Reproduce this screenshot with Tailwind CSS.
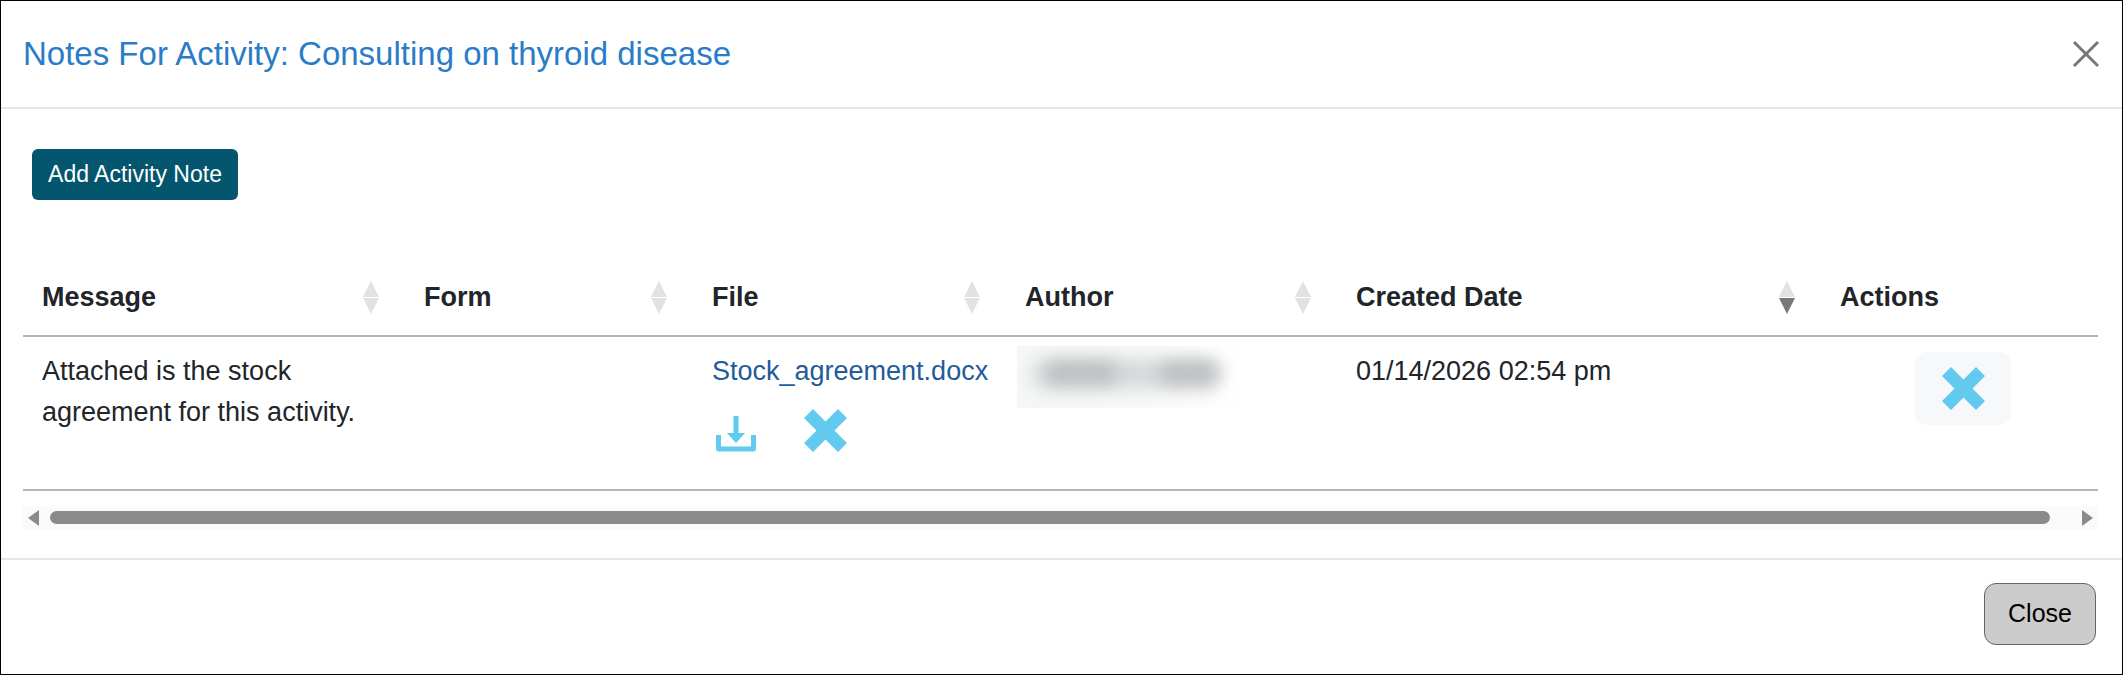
<!DOCTYPE html>
<html lang="en">
<head>
  <meta charset="UTF-8" />
  <title>Notes For Activity</title>
  <script src="https://cdn.jsdelivr.net/npm/@tailwindcss/browser@4"></script>
</head>
<body class="bg-white font-['Liberation_Sans',Arial,sans-serif] text-[#212529]">

  <div class="w-[2123px] h-[675px] border border-black flex flex-col overflow-hidden">

    <!-- header -->
    <div class="h-[108px] shrink-0 border-b-2 border-[#e5e7e9] flex items-center justify-between pl-[22px] pr-[22px]">
      <h4 class="text-[33px] leading-[40px] text-[#2a7cc7]">Notes For Activity: Consulting on thyroid disease</h4>
      <button aria-label="Close">
        <svg class="w-[28px] h-[28px]" viewBox="0 0 28 28" fill="none" stroke="#777" stroke-width="3"><path d="M2 2 L26 26 M26 2 L2 26" /></svg>
      </button>
    </div>

    <!-- body -->
    <div class="flex-1 pl-[22px] pr-[24px]">
      <button class="mt-[40px] ml-[9px] w-[206px] h-[51px] rounded-[6px] bg-[#04566e] text-white text-[23px]">Add Activity Note</button>

      <table class="w-[2075px] mt-[53px] table-fixed border-collapse text-[27px] leading-[41px]">
        <colgroup>
          <col class="w-[382px]" /><col class="w-[288px]" /><col class="w-[313px]" /><col class="w-[331px]" /><col class="w-[484px]" /><col />
        </colgroup>
        <thead>
          <tr class="h-[83px] border-b-2 border-[#b5b5b5] font-bold">
            <th class="text-left pl-[19px] pt-[7px] relative">Message<span class="absolute right-[26px] top-[28px] flex flex-col gap-[1px]"><span class="w-0 h-0 border-x-[8px] border-x-transparent border-b-[16px] border-b-[#e1e3e3]"></span><span class="w-0 h-0 border-x-[8px] border-x-transparent border-t-[16px] border-t-[#e1e3e3]"></span></span></th>
            <th class="text-left pl-[19px] pt-[7px] relative">Form<span class="absolute right-[26px] top-[28px] flex flex-col gap-[1px]"><span class="w-0 h-0 border-x-[8px] border-x-transparent border-b-[16px] border-b-[#e1e3e3]"></span><span class="w-0 h-0 border-x-[8px] border-x-transparent border-t-[16px] border-t-[#e1e3e3]"></span></span></th>
            <th class="text-left pl-[19px] pt-[7px] relative">File<span class="absolute right-[26px] top-[28px] flex flex-col gap-[1px]"><span class="w-0 h-0 border-x-[8px] border-x-transparent border-b-[16px] border-b-[#e1e3e3]"></span><span class="w-0 h-0 border-x-[8px] border-x-transparent border-t-[16px] border-t-[#e1e3e3]"></span></span></th>
            <th class="text-left pl-[19px] pt-[7px] relative">Author<span class="absolute right-[26px] top-[28px] flex flex-col gap-[1px]"><span class="w-0 h-0 border-x-[8px] border-x-transparent border-b-[16px] border-b-[#e1e3e3]"></span><span class="w-0 h-0 border-x-[8px] border-x-transparent border-t-[16px] border-t-[#e1e3e3]"></span></span></th>
            <th class="text-left pl-[19px] pt-[7px] relative">Created Date<span class="absolute right-[26px] top-[28px] flex flex-col gap-[1px]"><span class="w-0 h-0 border-x-[8px] border-x-transparent border-b-[16px] border-b-[#e1e3e3]"></span><span class="w-0 h-0 border-x-[8px] border-x-transparent border-t-[16px] border-t-[#77787b]"></span></span></th>
            <th class="text-left pl-[19px] pt-[7px]">Actions</th>
          </tr>
        </thead>
        <tbody>
          <tr class="h-[154px] border-b-2 border-[#b5b5b5] align-top">
            <td class="pl-[19px] pt-[14px] pr-[40px]">Attached is the stock agreement for this activity.</td>
            <td></td>
            <td class="pl-[19px] pt-[14px]">
              <a href="#" class="text-[#1f5c99] whitespace-nowrap">Stock_agreement.docx</a>
              <div class="flex items-end gap-[47px] pl-[3px] mt-[17px]">
                <svg class="w-[42px] h-[36px]" viewBox="0 0 42 36" fill="none" stroke="#62c9ef" stroke-width="5" stroke-linejoin="round"><path d="M3.5 19 V33 H38.5 V19" /><path d="M21 0 V18" /><path d="M12 17 H30 L21 27 Z" fill="#62c9ef" stroke="none" /></svg>
                <svg class="w-[43px] h-[43px]" viewBox="0 0 43 43" fill="#62c9ef"><path d="M9 0 L21.5 12.5 L34 0 L43 9 L30.5 21.5 L43 34 L34 43 L21.5 30.5 L9 43 L0 34 L12.5 21.5 L0 9 Z" /></svg>
              </div>
            </td>
            <td class="pl-[11px] pt-[9px]">
              <div class="relative w-[228px] h-[62px] bg-linear-to-r from-[#f5f6f6] via-[#f7f8f8] to-white overflow-hidden" aria-hidden="true">
                <span class="absolute left-[16px] top-[14px] w-[188px] h-[28px] bg-[#d4d6d7] rounded-full blur-[9px]"></span>
                <span class="absolute left-[28px] top-[16px] w-[72px] h-[22px] bg-[#bdbfc1] rounded-full blur-[8px]"></span>
                <span class="absolute left-[142px] top-[16px] w-[58px] h-[22px] bg-[#bdbfc1] rounded-full blur-[8px]"></span>
              </div>
            </td>
            <td class="pl-[19px] pt-[14px]">01/14/2026 02:54 pm</td>
            <td class="pt-[15px] pl-[94px]">
              <button aria-label="Delete" class="w-[96px] h-[73px] rounded-[12px] bg-[#f6f8fa] flex items-center justify-center">
                <svg class="w-[43px] h-[43px]" viewBox="0 0 43 43" fill="#62c9ef"><path d="M9 0 L21.5 12.5 L34 0 L43 9 L30.5 21.5 L43 34 L34 43 L21.5 30.5 L9 43 L0 34 L12.5 21.5 L0 9 Z" /></svg>
              </button>
            </td>
          </tr>
        </tbody>
      </table>

      <!-- horizontal scrollbar -->
      <div class="w-[2075px] h-[23px] mt-[15px] bg-[#fafafa] flex items-center pl-[5px] pr-[5px]">
        <span class="w-0 h-0 border-y-[8px] border-y-transparent border-r-[11px] border-r-[#8a8a8a]"></span>
        <span class="h-[13px] w-[2000px] ml-[11px] rounded-full bg-[#8a8a8a]"></span>
        <span class="w-0 h-0 ml-auto border-y-[8px] border-y-transparent border-l-[11px] border-l-[#8a8a8a]"></span>
      </div>
    </div>

    <!-- footer -->
    <div class="h-[116px] shrink-0 border-t-2 border-[#e5e7e9] flex justify-end pt-[23px] pr-[26px]">
      <button class="w-[112px] h-[62px] rounded-[12px] bg-[#cccccc] border border-[#666] text-[25px] text-black">Close</button>
    </div>
  </div>

</body>
</html>
